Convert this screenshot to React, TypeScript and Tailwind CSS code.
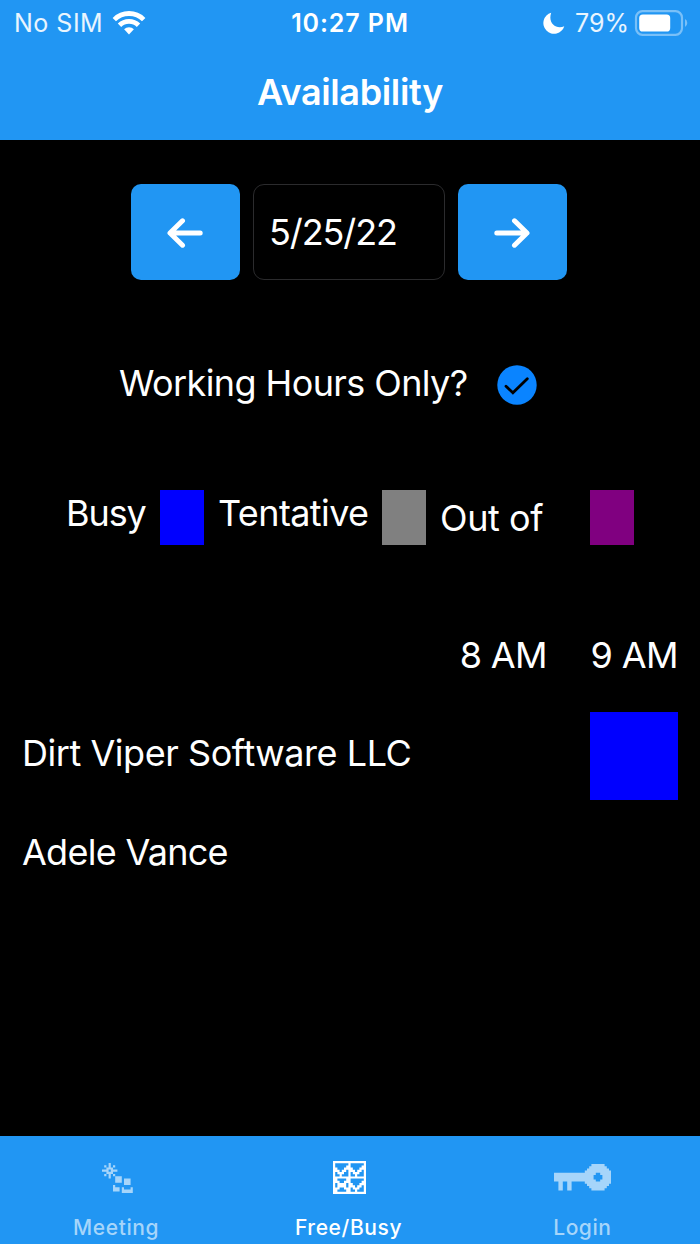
import type { ReactNode } from "react";
import { clsx } from "clsx";

const people = [
  { name: "Dirt Viper Software LLC", tracking: "tracking-[-0.45px]", slots: ["", "bg-[#0000ff]"] },
  { name: "Adele Vance", tracking: "tracking-[-0.72px]", slots: ["", ""] },
];

const hours = ["8 AM", "9 AM"];

// Pixel icons: every "X" is one filled cell
const meetingIcon = [
  "...X..........",
  ".X.X.X........",
  "..XXX.........",
  "XXX.XXX.......",
  "..XXX.........",
  ".X.X.X........",
  "...X..XXX.....",
  "......XXX.XXX.",
  "......XXX.XXX.",
  "..........XXX.",
  ".....X........",
  ".....XXX.X...X",
  ".....XXX.XXXXX",
  ".........XXXXX",
];

const freeBusyIcon = [
  "XXXXXXXXXXXXXXX",
  "X......X......X",
  "X.....XX.....XX",
  "XX...XXXX...XXX",
  "XXX.XX.XXX.XX.X",
  "X.XXX..X.XXX..X",
  "X..X...X..X...X",
  "XXXXXXXXXXXXXXX",
  "XX....XX......X",
  "XXX..XXX.....XX",
  "X.XXXX.XX...XXX",
  "X.XXXX.XXX.XX.X",
  "XXX..XXX.XXX..X",
  "XX....XX..X...X",
  "XXXXXXXXXXXXXXX",
];

const loginIcon = [
  ".................XXXXXX...",
  "................XXXXXXXX..",
  "...............XXXXXXXXXX.",
  "..............XXXXXXXXXXXX",
  "XXXXXXXXXXXXXXXXXXX..XXXXX",
  "XXXXXXXXXXXXXXXXXX....XXXX",
  "XXXXXXXXXXXXXXXXXX....XXXX",
  "XXXXXXXXXXXXXXXXXXX..XXXXX",
  "..XX..XX......XXXXXXXXXXXX",
  "..XX..XX.......XXXXXXXXXX.",
  "..XX..XX........XXXXXXXX..",
  "..XX..XX.........XXXXXX...",
];

const tabs = [
  { label: "Meeting", icon: meetingIcon, active: false, pad: "pt-[4px] pl-[1px]", tracking: "tracking-[0.6px] pr-[1px]" },
  { label: "Free/Busy", icon: freeBusyIcon, active: true, pad: "pt-[2px]", tracking: "tracking-[0.6px] pr-[3px]" },
  { label: "Login", icon: loginIcon, active: false, pad: "pt-[3px] pr-[2px]", tracking: "tracking-[0.5px] pr-[2px]" },
];

function PixelIcon({ rows }: { rows: string[] }) {
  const w = rows[0].length;
  const h = rows.length;
  // one path for all the runs, so that no seams show between the rows
  const d = rows
    .flatMap((row, y) =>
      (Array.from(row.matchAll(/X+/g)) as RegExpMatchArray[]).map(
        (run) => `M${run.index} ${y}h${run[0].length}v1h-${run[0].length}z`
      )
    )
    .join("");
  return (
    <svg width={w * 2.2} height={h * 2.2} viewBox={`0 0 ${w} ${h}`} fill="currentColor">
      <path d={d} />
    </svg>
  );
}

function Wifi() {
  return (
    <svg width="34" height="26" viewBox="0 0 34 26" fill="none" stroke="white" strokeWidth="4.8">
      <path d="M2.3 9.6a20.8 20.8 0 0 1 29.4 0" />
      <path d="M7.5 15.3a13.4 13.4 0 0 1 19 0" />
      <path d="M12.1 19.3a6.9 6.9 0 0 1 9.8 0L17 24.5z" fill="white" stroke="none" />
    </svg>
  );
}

function StatusBar() {
  return (
    <div className="grid h-[46px] grid-cols-3 items-center text-[25px] leading-none text-white">
      <div className="flex items-center pl-[14px]">
        <span className="w-[98px] whitespace-nowrap tracking-[0.5px] text-white/90">No SIM</span>
        <Wifi />
      </div>
      <span className="text-center font-semibold tracking-[0.9px]">10:27 PM</span>
      <div className="flex items-center justify-end pr-[12px]">
        <svg className="mr-[10px]" width="22" height="22" viewBox="0 0 22 22" fill="white">
          <path d="M8.2.8A10.7 10.7 0 1 0 21.3 14.2C13.5 17.8 4.5 11.5 8.2.8z" />
        </svg>
        <span className="whitespace-nowrap text-white/90">79%</span>
        <svg className="ml-[5px]" width="54" height="27" viewBox="0 0 54 27" fill="none">
          <rect x="2" y="1.2" width="46" height="23.6" rx="6.5" stroke="white" strokeOpacity=".4" strokeWidth="2.2" />
          <rect x="5.2" y="4.5" width="31" height="17" rx="3.6" fill="white" />
          <path d="M51 9q2.3 1.2 2.3 4t-2.3 4z" fill="white" fillOpacity=".4" />
        </svg>
      </div>
    </div>
  );
}

function ArrowButton({ back = false }: { back?: boolean }) {
  return (
    <button
      aria-label={back ? "Previous day" : "Next day"}
      className="flex h-[96px] w-[109px] items-center justify-center rounded-[10px] bg-[#2196f3] pr-[2px] pt-px"
    >
      <svg
        className={clsx(back && "rotate-180")}
        width="36"
        height="30"
        viewBox="0 0 36 30"
        fill="none"
        stroke="white"
        strokeWidth="5"
        strokeLinecap="round"
        strokeLinejoin="round"
      >
        <path d="M2.8 15h30M20.5 2.8L33 15 20.5 27.2" />
      </svg>
    </button>
  );
}

function Legend({ color, children }: { color: string; children: ReactNode }) {
  return (
    <div className="flex">
      {children}
      <span className={clsx("h-[55px] w-[44px]", color)} />
    </div>
  );
}

export default function App() {
  return (
    <div className="flex h-[1244px] w-[700px] flex-col overflow-hidden bg-black font-['Inter','Liberation_Sans',sans-serif] text-[36px] leading-[44px] text-white">
      <header className="h-[140px] shrink-0 bg-[#2196f3]">
        <StatusBar />
        <h1 className="mt-[24px] text-center text-[36px] font-semibold leading-[44px] tracking-[-0.35px]">
          Availability
        </h1>
      </header>

      <main className="flex-1">
        <div className="flex gap-[13px] pl-[131px] pt-[44px]">
          <ArrowButton back />
          <div className="flex h-[96px] w-[192px] items-center rounded-[11px] border border-[#2b2b2d] pl-[15px]">
            <span className="tracking-[-1.1px]">5/25/22</span>
          </div>
          <ArrowButton />
        </div>

        <div className="mt-[81px] flex h-[44px] items-center pl-[119px]">
          <span className="w-[378px] whitespace-nowrap tracking-[-0.6px]">Working Hours Only?</span>
          <svg className="mt-[4px]" width="40" height="40" viewBox="0 0 40 40" fill="none">
            <circle cx="20" cy="20" r="19.7" fill="#0a84ff" />
            <path d="M9 21.2l6.9 6.6L30.3 13.8" stroke="black" strokeWidth="2.8" strokeLinecap="round" />
          </svg>
        </div>

        <div className="mt-[85px] flex pl-[66px]">
          <Legend color="bg-[#0000ff]">
            <span className="w-[94px] whitespace-nowrap pt-px tracking-[-1.1px]">Busy</span>
          </Legend>
          <Legend color="bg-[#808080]">
            <span className="w-[178px] whitespace-nowrap pl-[14px] pt-px tracking-[-0.6px]">Tentative</span>
          </Legend>
          <Legend color="bg-[#800080]">
            <span className="w-[164px] whitespace-nowrap pl-[14px] pt-[6px] tracking-[-0.4px]">Out of</span>
          </Legend>
        </div>

        <div className="mt-[88px] flex justify-end pr-[22px]">
          {hours.map((hour) => (
            <span key={hour} className="w-[131px] whitespace-nowrap text-right tracking-[-0.6px]">
              {hour}
            </span>
          ))}
        </div>

        <div className="mt-[35px] flex flex-col gap-[11px] px-[22px]">
          {people.map((person) => (
            <div key={person.name} className="flex h-[87.5px] items-center">
              <span className={clsx("flex-1 whitespace-nowrap pb-[5px]", person.tracking)}>{person.name}</span>
              <div className="flex gap-[43px]">
                {person.slots.map((slot, i) => (
                  <span key={i} className={clsx("h-[87.5px] w-[88px]", slot)} />
                ))}
              </div>
            </div>
          ))}
        </div>
      </main>

      <nav className="grid h-[108px] shrink-0 grid-cols-3 bg-[#2196f3]">
        {tabs.map((tab) => (
          <div
            key={tab.label}
            className={clsx("flex flex-col items-center", tab.active ? "text-white" : "text-[#a6d5fa]")}
          >
            <div className={clsx("flex h-[80px] items-center", tab.pad)}>
              <PixelIcon rows={tab.icon} />
            </div>
            <span className={clsx("text-[21px] font-medium leading-[24px]", tab.tracking)}>{tab.label}</span>
          </div>
        ))}
      </nav>
    </div>
  );
}
